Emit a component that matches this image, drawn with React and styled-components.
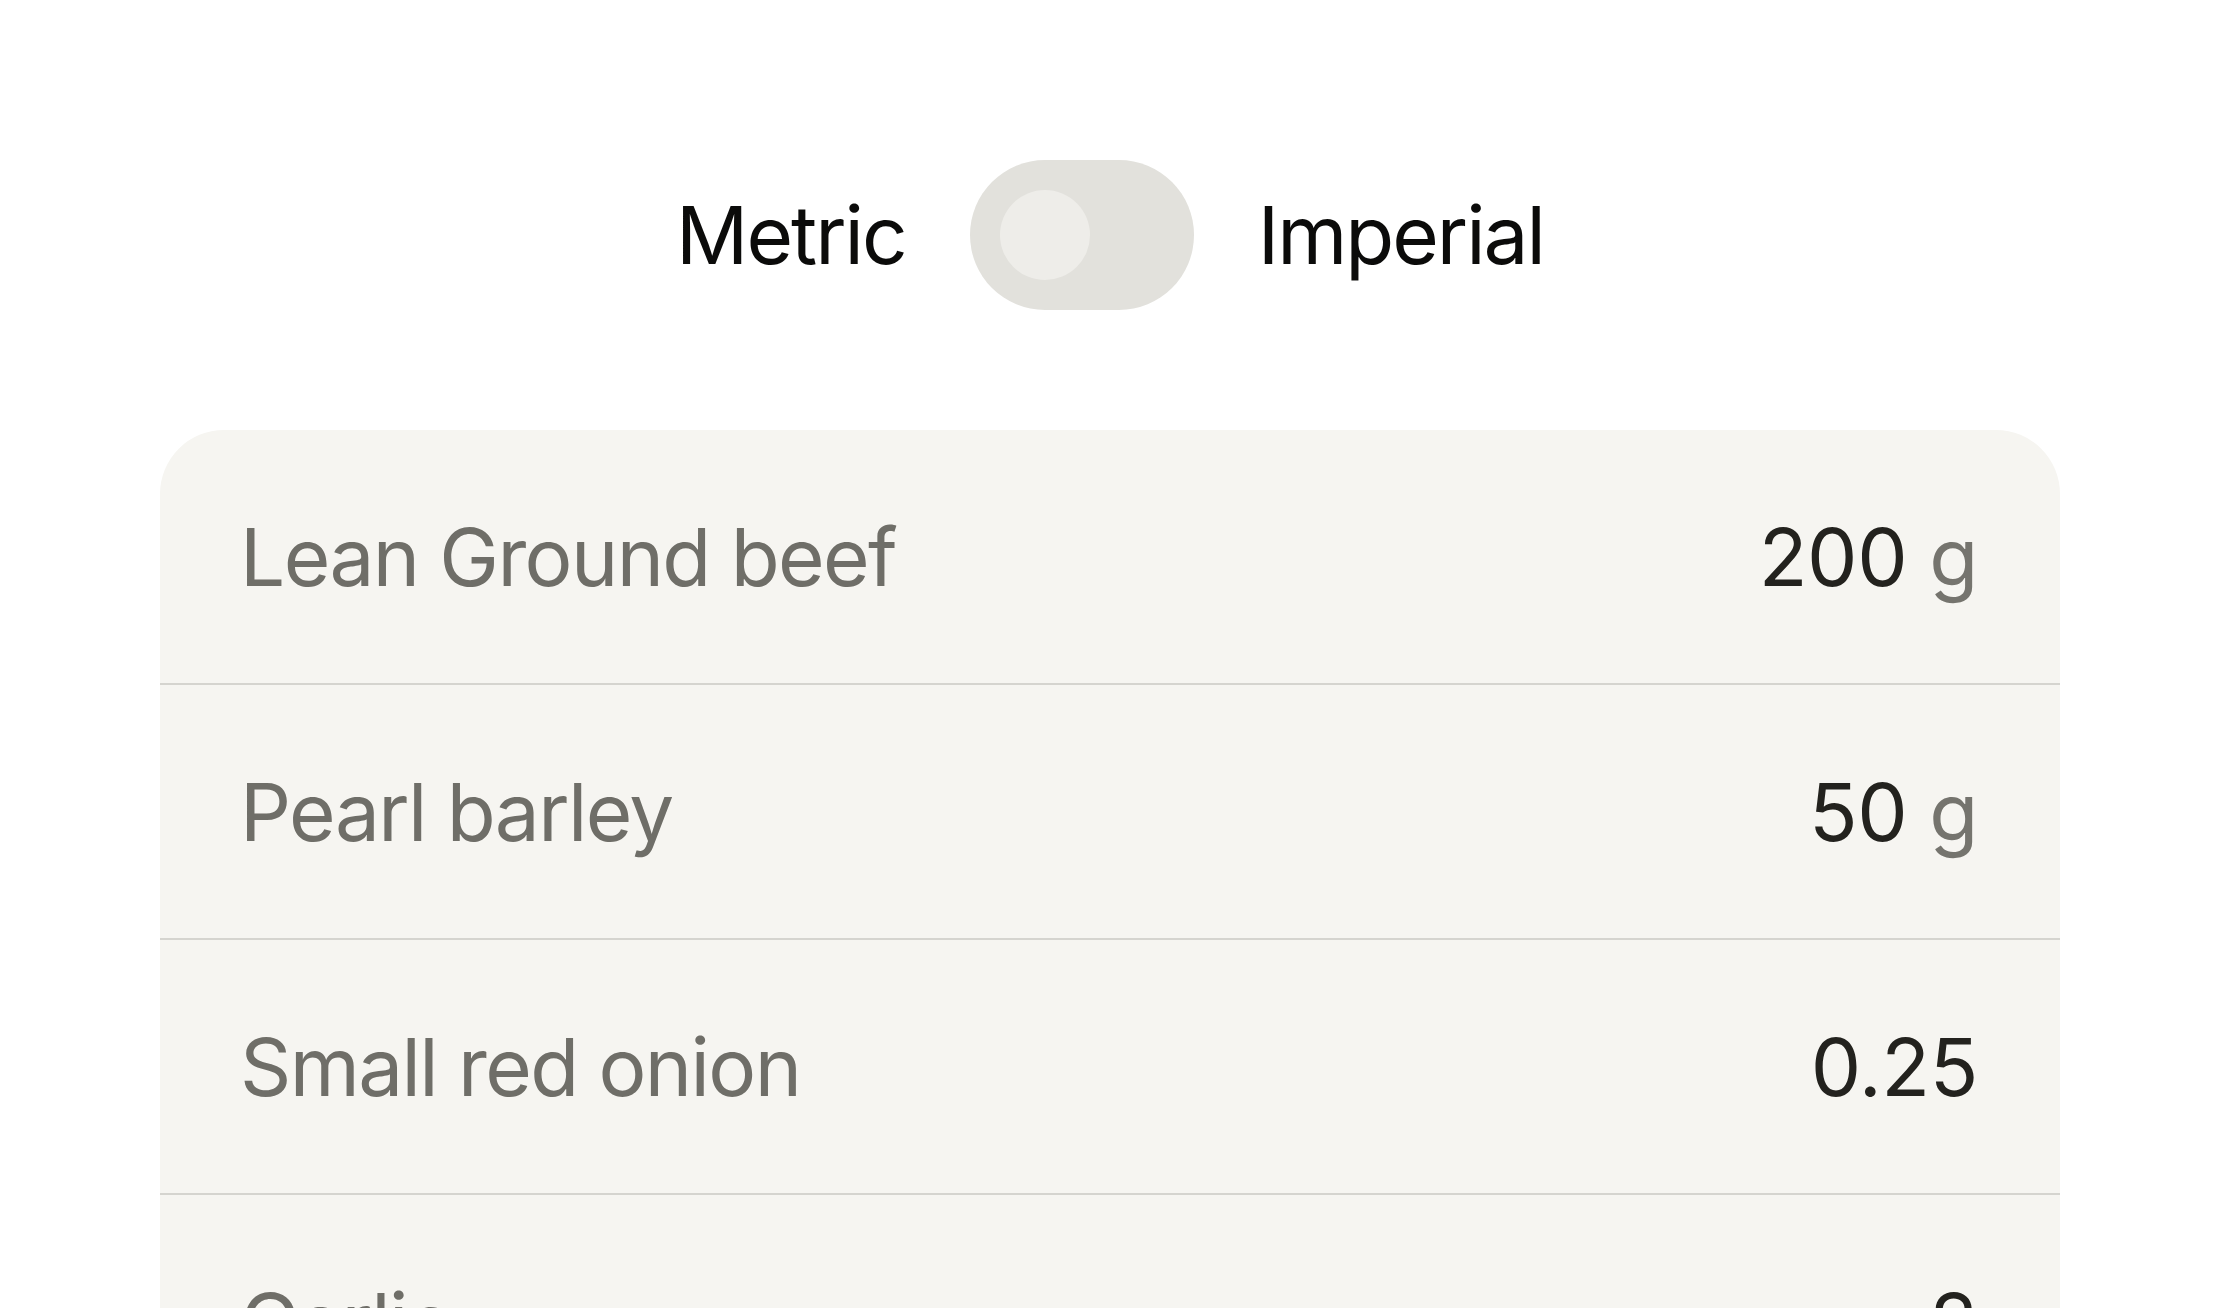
import React, { useState } from "react";
import styled, { createGlobalStyle } from "styled-components";

const Global = createGlobalStyle`
  html, body { margin: 0; padding: 0; background: #ffffff; }
  body { font-family: Inter, "Noto Sans", sans-serif; -webkit-font-smoothing: antialiased; }
  * { box-sizing: border-box; }
`;

const Page = styled.main`
  padding: 160px 160px 0;
  display: flex;
  flex-direction: column;
  gap: 120px;
`;

const UnitToggleRow = styled.div`
  display: flex;
  align-items: center;
  justify-content: center;
  gap: 64px;
`;

const UnitLabel = styled.span`
  font-size: 80px;
  line-height: 1;
  color: #0b0b0a;
  letter-spacing: -2px;
`;

const Track = styled.button`
  width: 224px;
  height: 150px;
  border-radius: 75px;
  border: none;
  padding: 30px;
  background: #e2e1dc;
  display: flex;
  align-items: center;
  justify-content: ${(p) => (p.$on ? "flex-end" : "flex-start")};
  cursor: pointer;
`;

const Knob = styled.span`
  width: 90px;
  height: 90px;
  border-radius: 50%;
  background: #eeede9;
`;

const Card = styled.section`
  background: #f6f5f1;
  border-radius: 64px 64px 0 0;
  display: flex;
  flex-direction: column;
`;

const Row = styled.div`
  height: 255px;
  flex-shrink: 0;
  padding: 0 82px 0 80px;
  display: flex;
  align-items: center;
  justify-content: space-between;
  border-bottom: 2px solid #d5d4cf;
`;

const Name = styled.span`
  font-size: 80px;
  line-height: 1;
  color: #6f6e68;
  letter-spacing: -1.6px;
`;

const Amount = styled.span`
  font-size: 80px;
  line-height: 1;
  color: #23221e;
  letter-spacing: -0.4px;
`;

const Unit = styled.span`
  color: #75746e;
`;

const items = [
  { name: "Lean Ground beef", qty: "200", unit: "g" },
  { name: "Pearl barley", qty: "50", unit: "g" },
  { name: "Small red onion", qty: "0.25" },
  { name: "Garlic", qty: "2" },
];

export default function App() {
  const [imperial, setImperial] = useState(false);
  return (
    <>
      <Global />
      <Page>
        <UnitToggleRow>
          <UnitLabel>Metric</UnitLabel>
          <Track $on={imperial} onClick={() => setImperial((v) => !v)} aria-label="Toggle units">
            <Knob />
          </Track>
          <UnitLabel>Imperial</UnitLabel>
        </UnitToggleRow>
        <Card>
          {items.map((it) => (
            <Row key={it.name}>
              <Name>{it.name}</Name>
              <Amount>
                {it.qty}
                {it.unit && <Unit> {it.unit}</Unit>}
              </Amount>
            </Row>
          ))}
        </Card>
      </Page>
    </>
  );
}
